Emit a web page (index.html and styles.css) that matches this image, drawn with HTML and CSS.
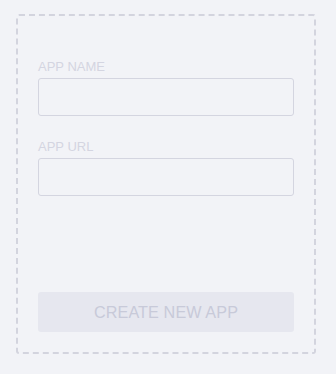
FILE: index.html
```html
<!DOCTYPE html>
<html>
<head>
<meta charset="utf-8">
<link rel="stylesheet" href="styles.css">
</head>
<body>
<form class="card">
  <label class="field-label" for="app-name">APP NAME</label>
  <input class="field-input" id="app-name" type="text">
  <label class="field-label field-label--second" for="app-url">APP URL</label>
  <input class="field-input" id="app-url" type="text">
  <button class="create-btn" type="button">CREATE NEW APP</button>
</form>
</body>
</html>
```
FILE: styles.css
```css
html, body {
  margin: 0;
  padding: 0;
  background: #f2f3f7;
}
body {
  width: 336px;
  height: 374px;
  overflow: hidden;
  font-family: "Liberation Sans", Arial, sans-serif;
}
.card {
  box-sizing: border-box;
  width: 300px;
  height: 340px;
  margin: 14px 0 0 16px;
  border: 2px dashed #d3d4de;
  border-radius: 3px;
  padding: 43px 20px 20px;
  display: flex;
  flex-direction: column;
}
.field-label {
  font-size: 13px;
  line-height: 16px;
  color: #d4d5e1;
  margin-bottom: 3px;
}
.field-label--second {
  margin-top: 23px;
}
.field-input {
  box-sizing: border-box;
  height: 38px;
  width: 100%;
  margin: 0;
  border: 1px solid #d4d5e0;
  border-radius: 3px;
  background: #f2f3f7;
  padding: 0 10px;
  outline: none;
}
.create-btn {
  margin-top: auto;
  box-sizing: border-box;
  height: 40px;
  width: 100%;
  border: none;
  border-radius: 3px;
  background: #e6e7ef;
  color: #c8cad9;
  font-family: "Liberation Sans", Arial, sans-serif;
  font-size: 16.2px;
  letter-spacing: 0.1px;
  padding: 0;
}
```
